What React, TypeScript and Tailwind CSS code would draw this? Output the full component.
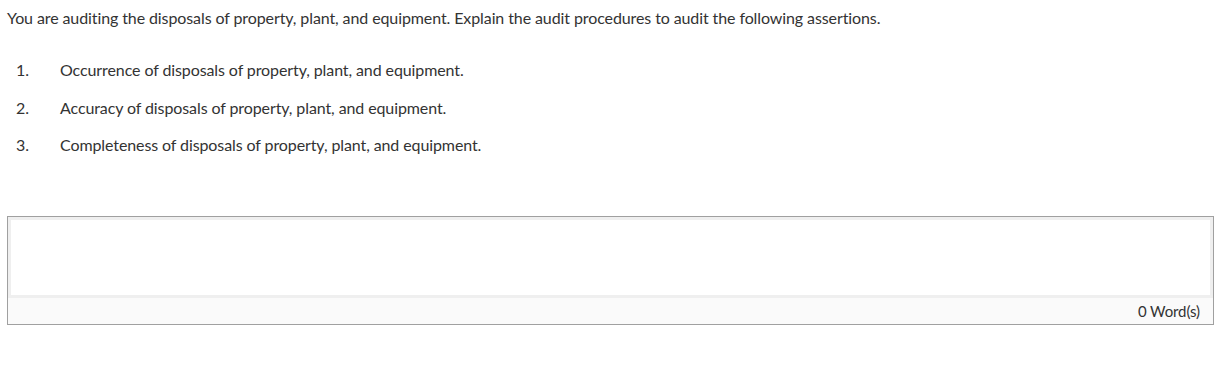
export default function App() {
  const items = [
    'Occurrence of disposals of property, plant, and equipment.',
    'Accuracy of disposals of property, plant, and equipment.',
    'Completeness of disposals of property, plant, and equipment.',
  ];

  return (
    <div className="min-h-screen bg-white text-[#333333] font-['Lato',sans-serif] text-[16px] tracking-[-0.1px]">
      <div className="pl-[7px] pr-4 pt-[8px]">
        <p className="leading-[20px]">
          You are auditing the disposals of property, plant, and equipment. Explain the audit procedures to audit the
          following assertions.
        </p>

        <ol className="mt-[32px] space-y-[17.5px]">
          {items.map((text, i) => (
            <li key={i} className="flex leading-[20px]">
              <span className="w-[53px] pl-[9px]">{i + 1}.</span>
              <span>{text}</span>
            </li>
          ))}
        </ol>

        {/* Answer box */}
        <div className="mt-[61px] w-[1207px] border border-[#a0a0a0]">
          <div className="h-[81px] border-[3px] border-[#efefef] bg-white" />
          <div className="flex h-[26px] items-center justify-end bg-[#fafafa] pr-[13px] text-[15px]">
            0 Word(s)
          </div>
        </div>
      </div>
    </div>
  );
}
